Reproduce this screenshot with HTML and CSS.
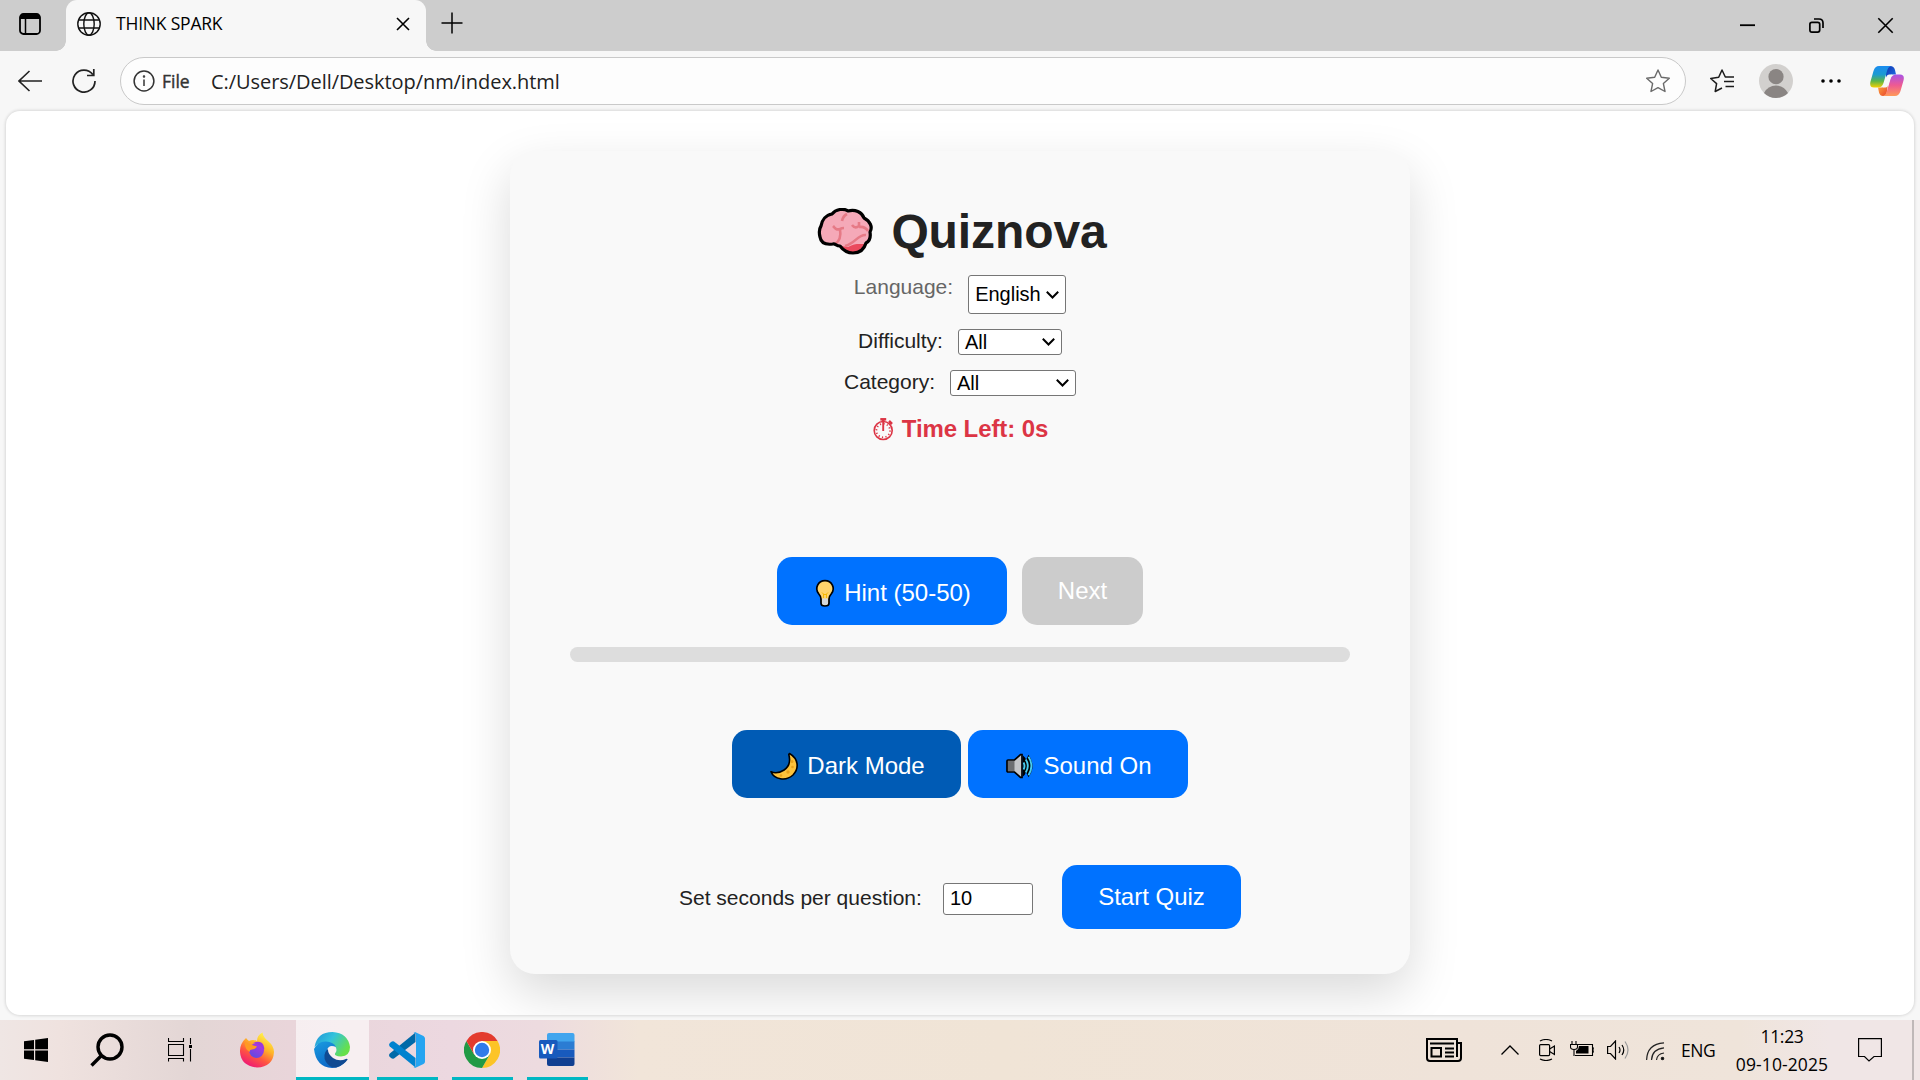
FILE: index.html
```html
<!DOCTYPE html>
<html lang="en">
<head>
<meta charset="utf-8">
<title>THINK SPARK</title>
<link rel="stylesheet" href="styles.css">
</head>
<body>
<div class="desktop">
  <header class="tabstrip">
    <svg class="tab-actions" viewBox="0 0 22 22"><rect x="1" y="1" width="20" height="20" rx="3.5" fill="none" stroke="#000" stroke-width="1.8"/><path d="M1 6V4.500Q1 1 4.500 1H17.500Q21 1 21 4.500V6Z"/><path d="M6.500 6V21" stroke="#000" stroke-width="1.500"/></svg>
    <div class="tab">
      <svg class="globe" viewBox="0 0 24 24" fill="none" stroke="#111" stroke-width="1.400"><circle cx="12" cy="12" r="11.200"/><ellipse cx="12" cy="12" rx="5.200" ry="11.200"/><path d="M2 8H22M2 16H22"/></svg>
      <span class="tab-title">THINK SPARK</span>
      <svg class="tab-close" viewBox="0 0 14 14" stroke="#000" stroke-width="1.600"><path d="M1 1L13 13M13 1L1 13"/></svg>
    </div>
    <svg class="new-tab" viewBox="0 0 22 22" stroke="#000" stroke-width="1.500"><path d="M11 0.500V21.500M0.500 11H21.500"/></svg>
    <div class="window-controls">
      <svg viewBox="0 0 15 15" stroke="#000" stroke-width="1.800"><path d="M0 7.200H15"/></svg>
      <svg viewBox="0 0 15 15" fill="none" stroke="#000" stroke-width="1.700"><rect x="0.900" y="4.300" width="9.800" height="9.800" rx="2"/><path d="M5 1H10Q14 1 14 5V10"/></svg>
      <svg viewBox="0 0 15 15" stroke="#000" stroke-width="1.600"><path d="M0.300 0.300L14.700 14.700M14.700 0.300L0.300 14.700"/></svg>
    </div>
  </header>

  <nav class="toolbar">
    <svg class="back" viewBox="0 0 24 22" fill="none" stroke="#222" stroke-width="1.600"><path d="M24 11H1M11.500 1L1 11L11.500 21"/></svg>
    <svg class="reload" viewBox="0 0 24 24" fill="none" stroke="#222" stroke-width="1.700"><path d="M23 12A11 11 0 1 1 20.800 5.500M21.800 0V6.500H15"/></svg>
    <div class="address">
      <svg class="info" viewBox="0 0 22 22" fill="none" stroke="#333" stroke-width="1.500"><circle cx="11" cy="11" r="9.900"/><path d="M11 9.500V16"/><circle cx="11" cy="6.500" r="0.500"/></svg>
      <span class="scheme">File</span>
      <span class="url">C:/Users/Dell/Desktop/nm/index.html</span>
      <svg class="star" viewBox="0 0 24 24" fill="none" stroke="#6a6a6a" stroke-width="1.400" stroke-linejoin="round"><path d="M12 1L15.300 8.300L23.300 9.200L17.400 14.600L19 22.500L12 18.700L5 22.500L6.600 14.600L0.700 9.200L8.700 8.300Z"/></svg>
    </div>
    <svg class="favorites" viewBox="0 0 24 24" fill="none" stroke="#1c1c1c" stroke-width="1.500" stroke-linejoin="round"><path d="M12 19L5.200 22.500L6.600 14.600L0.700 9.500L8.700 8.300L12 1L15.300 8H24M14 12.500H24M15.500 17.500H24"/></svg>
    <svg class="avatar" viewBox="0 0 34 34"><circle cx="17" cy="17" r="17" fill="#d2d0ce"/><circle cx="17" cy="12.700" r="7.600" fill="#8a8583"/><path d="M5 29Q9 21.500 17 21.500T29 29Q24 34 17 34T5 29Z" fill="#8a8583"/></svg>
    <svg class="more" viewBox="0 0 20 4"><circle cx="2" cy="2" r="1.800"/><circle cx="10" cy="2" r="1.800"/><circle cx="18" cy="2" r="1.800"/></svg>
    <svg class="copilot" viewBox="0 0 34 30">
      <defs>
        <linearGradient id="cpA" x1="0" y1="0" x2="0" y2="1"><stop offset="0" stop-color="#1b8cf0"/><stop offset=".4" stop-color="#1b9bd0"/><stop offset=".7" stop-color="#5bb548"/><stop offset="1" stop-color="#f5d000"/></linearGradient>
        <linearGradient id="cpB" x1="0" y1="0" x2="0" y2="1"><stop offset="0" stop-color="#a953e6"/><stop offset=".5" stop-color="#ee5a92"/><stop offset="1" stop-color="#ff9a58"/></linearGradient>
        <linearGradient id="cpC" x1="0" y1="0" x2="1" y2="1"><stop offset="0" stop-color="#1136b0"/><stop offset="1" stop-color="#1f70e8"/></linearGradient>
        <linearGradient id="cpD" x1="0" y1="0" x2="1" y2="1"><stop offset="0" stop-color="#ffae3c"/><stop offset="1" stop-color="#e8402e"/></linearGradient>
      </defs>
      <path d="M16 0H20Q24 0 25 4L26 8.500H22Q19 8.500 18 11L16 12Z" fill="url(#cpC)"/>
      <path d="M8 21.500H12Q15 21.500 16 19L18 18L17 25Q16.500 30 14 30H13Q10 30 9 26.500Z" fill="url(#cpD)"/>
      <path d="M9 0H21Q18 1 17 5L13.500 17Q12 21.500 8 21.500H4Q-1 21.500 0.500 15.500L3.500 5Q5 0 9 0Z" fill="url(#cpA)"/>
      <path d="M25 30H13Q16 29 17 25L20.500 13Q22 8.500 26 8.500H30Q35 8.500 33.500 14.500L30.500 25Q29 30 25 30Z" fill="url(#cpB)"/>
      <path d="M22 8.500H19Q17 8.500 16.200 11L13 21.500H15.500Q17.500 21.500 18.300 19L20.500 12Q21 9.500 22 8.500Z" fill="#f7f7f7"/>
    </svg>
  </nav>

  <main class="page">
    <section class="card">
      <h1 class="title">
        <svg class="brain" viewBox="0 0 60 48"><path d="M7 18C8 12 12 7 18 6C22 1 30 0 34 3C41 1 48 4 50 10C56 13 59 19 56 24C57 30 56 33 52 35C50 42 45 45 39 45C33 45 29 42 26 38C22 38 21 35 19 36C12 37 7 35 6 29C5 25 5 21 7 18Z" fill="#f5a9b8"/><path d="M34 39Q40 36 43 36H51Q48 44 39 44.500Q32 44 27 38Z" fill="#ea4a5d"/><path d="M19 18C22 21 22 22 26 21C28 20 29 20 30 20M26 21C27 27 26 33 21 36M33 6Q29 8 28 13M45 14V18Q41 21 38 17M45 19Q51 18 54 23M52 27C44 26 42 35 31 38" fill="none" stroke="#e67a86" stroke-width="2.600"/><path d="M7 18C8 12 12 7 18 6C22 1 30 0 34 3C41 1 48 4 50 10C56 13 59 19 56 24C57 30 56 33 52 35C50 42 45 45 39 45C33 45 29 42 26 38C22 38 21 35 19 36C12 37 7 35 6 29C5 25 5 21 7 18Z" fill="none" stroke="#000" stroke-width="3.200" stroke-linejoin="round"/></svg>
        <span>Quiznova</span>
      </h1>
      <div class="field language">
        <span class="label">Language:</span>
        <span class="select">English<svg class="chevron" viewBox="0 0 13 8"><path d="M0.800 0.800L6.500 6.500L12.200 0.800"/></svg></span>
      </div>
      <div class="field difficulty">
        <span class="label">Difficulty:</span>
        <span class="select">All<svg class="chevron" viewBox="0 0 13 8"><path d="M0.800 0.800L6.500 6.500L12.200 0.800"/></svg></span>
      </div>
      <div class="field category">
        <span class="label">Category:</span>
        <span class="select">All<svg class="chevron" viewBox="0 0 13 8"><path d="M0.800 0.800L6.500 6.500L12.200 0.800"/></svg></span>
      </div>
      <div class="timer">
        <svg class="stopwatch" viewBox="0 0 24 24" fill="none" stroke="#dc3545"><circle cx="12.200" cy="13.500" r="9" stroke-width="1.600"/><circle cx="12.200" cy="13.500" r="6.800" stroke-width="1.800" stroke-dasharray="1.200 2.360"/><path d="M12.200 14V5" stroke-width="1.900"/><path d="M9.300 2.300H15.200" stroke-width="2.500"/><path d="M12.200 2V5" stroke-width="2.800"/><path d="M18 4L21 7" stroke-width="2.500"/></svg>
        <span>Time Left: 0s</span>
      </div>
      <div class="actions">
        <button class="btn hint"><svg class="emoji" viewBox="0 0 28 28"><path d="M10 20Q10 17.500 7.500 14.500C3.500 9 7 1.700 14 1.700S24.500 9 20.500 14.500Q18 17.500 18 20V24Q18 27 14 27T10 24Z" fill="#ffd36b" stroke="#000" stroke-width="1.700"/><path d="M11 19.500H17V24.500Q16.500 26 14 26T11 24.500Z" fill="#d6d8da"/><path d="M12.500 19V15L11 13.500M15.500 19V15L17 13.500M12.500 15.500H15.500" fill="none" stroke="#f6b800"/></svg>Hint (50-50)</button>
        <button class="btn next">Next</button>
      </div>
      <div class="progress"></div>
      <div class="toggles">
        <button class="btn dark"><svg class="emoji" viewBox="0 0 28 28"><path d="M19.500 1.500C29 7 29 17 23 23C16 29.500 4 27.500 1 19.800C8 22.500 23 18 18.800 2.500Z" fill="#fcc23c" stroke="#000" stroke-width="1.600" stroke-linejoin="round"/><g fill="#e8a21c"><circle cx="22" cy="9.500" r="1.500"/><circle cx="22.500" cy="15" r="1.300"/><circle cx="18" cy="20" r="1.700"/><circle cx="11" cy="23.500" r="1.300"/></g></svg>Dark Mode</button>
        <button class="btn sound"><svg class="emoji" viewBox="0 0 28 28"><path d="M17 3.500Q20 6 20 8L22.500 2.800Q30.500 14 22.500 25.200L20 20Q19 23 17 24.500Z"/><path d="M17.500 10.500Q19.500 14 17.500 17.500M19.800 7.500Q23.800 14 19.800 20.500M22.500 4.800Q28.300 14 22.500 23.200" fill="none" stroke="#48cdf0" stroke-width="1.900"/><path d="M1 9Q1 8 2 8H8.500L14.500 2.500H16V25.500H14.500L8.500 20H2Q1 20 1 19Z" fill="#c3c5c8"/><path d="M1.500 8.500H8.500V19.500H1.500Z" fill="#6c6e71"/><path d="M1 9Q1 8 2 8H8.500L14.500 2.500H16V25.500H14.500L8.500 20H2Q1 20 1 19Z" fill="none" stroke="#000" stroke-width="1.700"/></svg>Sound On</button>
      </div>
      <div class="setup">
        <span class="label">Set seconds per question:</span>
        <input class="seconds" type="text" value="10">
        <button class="btn start">Start Quiz</button>
      </div>
    </section>
  </main>

  <footer class="taskbar">
    <div class="item menu"><svg width="24" height="24" viewBox="0 0 24 24"><path d="M0 3.300L10 2V11.300H0ZM11.200 1.800L24 0V11.300H11.200ZM0 12.500H10V22L0 20.700ZM11.200 12.500H24V24L11.200 22.200Z"/></svg></div>
    <div class="item search"><svg width="34" height="34" viewBox="0 0 34 34" fill="none" stroke="#000" stroke-width="3.400"><circle cx="20" cy="14" r="12"/><path d="M11.500 22.500L1.500 32.500"/></svg></div>
    <div class="item views"><svg width="24" height="24" viewBox="0 0 24 24" fill="none" stroke="#000" stroke-width="1.100"><path d="M0.500 0V3.500H15.500V0M0.500 6.500H15.500V17.500H0.500ZM0.500 23.500V20.500H15.500V23.500M22.500 0V6M22.500 11V23.500"/><path d="M21 7H24V10H21Z" fill="#000" stroke="none"/></svg></div>
    <div class="item firefox"><svg width="36" height="36" viewBox="0 0 36 36">
      <defs><linearGradient id="ffA" x1=".8" y1=".1" x2=".3" y2="1"><stop offset="0" stop-color="#fff04b"/><stop offset=".35" stop-color="#ffb327"/><stop offset=".65" stop-color="#ff5640"/><stop offset="1" stop-color="#ee1678"/></linearGradient><linearGradient id="ffB" x1=".8" y1="0" x2=".2" y2="1"><stop offset="0" stop-color="#b833e1"/><stop offset="1" stop-color="#5b4ce0"/></linearGradient></defs>
      <path d="M7 6Q8.500 8 10 9Q14 7 18 9Q18 3 23.500 0.500Q24 5 29 9Q35 14 35 20Q34 35 18 35.500Q2 34 1 20Q0.500 12 7 6Z" fill="url(#ffA)"/><circle cx="17.500" cy="18.500" r="7.500" fill="url(#ffB)"/><path d="M14 11Q19 8.500 23 11Q26 14 25 18Q21 12 14 11Z" fill="#9b39dc"/><path d="M6 9Q8 12 13 13L18 14.500Q17 17 13 17.500Q10 18 11 20Q5 17 6 9Z" fill="#ff9a22"/></svg></div>
    <div class="item edge active"><svg width="36" height="36" viewBox="0 0 36 36">
      <defs><linearGradient id="edA" x1="0" y1="0" x2="1" y2=".5"><stop offset="0" stop-color="#2093d8"/><stop offset=".5" stop-color="#33c3dc"/><stop offset="1" stop-color="#66e04b"/></linearGradient><linearGradient id="edB" x1="0" y1="0" x2=".6" y2="1"><stop offset="0" stop-color="#1a9ce0"/><stop offset="1" stop-color="#0b62c4"/></linearGradient></defs>
      <path d="M0.500 15Q3 0 18.500 0Q34 1 36 15Q36 24 27 24.500Q20 24 21 21.500Q24 18 21 14Q14 7 5 12Q2 13 0.500 15Z" fill="url(#edA)"/><path d="M0 17Q4 9 12 9.500Q20 10 22 15Q15 12 13 18Q12 26 20 29.500Q27 31 33 27Q28 36 18 36Q2 35 0 17Z" fill="url(#edB)"/><path d="M13.500 17Q8 23 12 30Q16 36 22 35.500Q30 33 33.700 27.500Q33 26.500 32 27Q25 30 19 26Q14 22 14 18Z" fill="#104a92"/></svg></div>
    <div class="item open vscode"><svg width="36" height="36" viewBox="0 0 36 36"><path d="M26.500 0.500V10L5 26.500Q3.500 27 2 26L0.500 24.500Q-0.500 23 0.800 21.500Z" fill="#0069a8"/><path d="M26.500 35.500V26L5 9.500Q3.500 9 2 10L0.500 11.500Q-0.500 13 0.800 14.500Z" fill="#0082cf"/><path d="M26.500 0.300L34.500 4Q36 5 36 6.500V29.500Q36 31 34.500 32L26.500 35.700Q25.500 36 24.500 35L27 34V2L24.500 1Q25.500 0 26.500 0.300Z" fill="#25a4f1"/></svg></div>
    <div class="item open chrome"><svg width="36" height="36" viewBox="0 0 36 36"><path d="M18 9H33.600A18 18 0 0 1 18 36L25.800 22.500Z" fill="#fcc427"/><path d="M10.200 22.500L2.400 9A18 18 0 0 0 18 36L25.800 22.500Z" fill="#219a45"/><path d="M18 9H33.600A18 18 0 0 0 2.400 9L10.200 22.500Z" fill="#e33b2e"/><circle cx="18" cy="18" r="9" fill="#fff"/><circle cx="18" cy="18" r="7.200" fill="#2f7bea"/></svg></div>
    <div class="item open word"><span class="word-logo"><svg width="36" height="34" viewBox="0 0 36 34"><path d="M10 0H33.500Q35.500 0 35.500 2V9H8V2Q8 0 10 0Z" fill="#41a5ee"/><path d="M8 8.500H35.500V16.500H8Z" fill="#2b7cd3"/><path d="M8 16.500H35.500V24.500H8Z" fill="#185abd"/><path d="M8 24.500H35.500V31Q35.500 33 33.500 33H10Q8 33 8 31Z" fill="#103f91"/><rect x="0" y="7" width="18.500" height="18.500" rx="1.500" fill="#185abd"/></svg><b>W</b></span></div>

    <div class="tray">
      <svg class="news" viewBox="0 0 36 24" fill="none" stroke="#000"><path d="M31 5H35V20Q35 23 32 23H4Q1 23 1 20V1H31V19" stroke-width="2"/><path d="M4 5.500H28M19 10.500H28M19 14.500H28M19 18.500H28" stroke-width="1.800"/><rect x="5.500" y="10" width="9.500" height="8.500" stroke-width="2"/></svg>
      <svg class="up" viewBox="0 0 18 10" fill="none" stroke="#000" stroke-width="1.300"><path d="M0.500 9.500L9 1L17.500 9.500"/></svg>
      <svg class="camera" viewBox="0 0 16 22" fill="none" stroke="#000" stroke-width="1.200"><path d="M1 2Q7 -1 13 2M1 20Q7 23 13 20"/><rect x="0.600" y="5.600" width="10" height="11" rx="1"/><path d="M10.600 10L15.400 7V15.500L10.600 12.500"/></svg>
      <svg class="battery" viewBox="0 0 24 16" fill="none" stroke="#000" stroke-width="1.100"><path d="M7 3.500H22.500V14.500H5M22.500 7H24V11H22.500M2 0V3M6 0V3M0.500 3.500H7.500V6Q7.500 8.500 4 8.500Q0.500 8.500 0.500 6ZM4 9V15"/><path d="M9 5H18.500V12.500H6V10Q9 8 9 5Z" fill="#000" stroke="none"/></svg>
      <svg class="volume" viewBox="0 0 22 20" fill="none" stroke="#000" stroke-width="1.200"><path d="M0.600 6.500H3.500L8.500 1V19L3.500 13.500H0.600ZM12 7Q14 10 12 13M15 5Q18.500 10 15 15"/><path d="M18 1.500Q24 10 18 18.500" stroke="#999"/></svg>
      <svg class="wifi" viewBox="0 0 19 19" fill="none" stroke="#222" stroke-width="1.200"><path d="M0.600 18Q1 2 18 0.800M5.500 18Q6 7 18 5.800M10.500 18Q11 12 18 11"/><circle cx="16.500" cy="16.500" r="1.200" fill="#000"/></svg>
      <span class="lang">ENG</span>
      <div class="clock"><span>11:23</span><span class="date">09-10-2025</span></div>
      <svg class="notify" viewBox="0 0 24 24" fill="none" stroke="#000" stroke-width="1.200"><path d="M0.600 0.600H23.400V18.500H16L11 23L6.500 18.500H0.600Z"/></svg>
      <span class="peek"></span>
    </div>
  </footer>
</div>
</body>
</html>
```
FILE: styles.css
```css
* { box-sizing: border-box; }
body { margin: 0; width: 1920px; height: 1080px; overflow: hidden; font-family: "Liberation Sans", Arial, sans-serif; color: #222; }
svg { display: block; flex: none; }
.desktop { display: flex; flex-direction: column; height: 1080px; background: #f7f7f7; }

/* browser tabs */
.tabstrip { display: flex; align-items: flex-start; height: 51px; flex: none; background: #cdcdcd; font-family: "Open Sans", "Noto Sans", sans-serif; }
.tab-actions { width: 22px; height: 22px; margin: 13px 25px 0 19px; }
.tab { position: relative; display: flex; align-items: center; width: 360px; height: 51px; padding: 0 16px 3px 11px; background: #f7f7f7; border-radius: 11px 11px 0 0; }
.tab::before, .tab::after { content: ""; position: absolute; bottom: 0; width: 10px; height: 10px; }
.tab::before { left: -10px; background: radial-gradient(circle at 0 0, #cdcdcd 9.5px, #f7f7f7 10px); }
.tab::after { right: -10px; background: radial-gradient(circle at 100% 0, #cdcdcd 9.5px, #f7f7f7 10px); }
.globe { width: 24px; height: 24px; }
.tab-title { flex: 1; margin-left: 15px; font-size: 17.5px; letter-spacing: -0.2px; line-height: 47px; padding-bottom: 1px; color: #000; }
.tab-close { width: 14px; height: 14px; }
.new-tab { width: 22px; height: 22px; margin: 12px 0 0 15px; }
.window-controls { display: flex; gap: 54px; margin: 18px 27px 0 auto; }
.window-controls svg { width: 15px; height: 15px; overflow: visible; }

/* address row */
.toolbar { display: flex; align-items: center; height: 60px; flex: none; padding: 0 16px 0 18px; font-family: "Open Sans", "Noto Sans", sans-serif; }
.back { width: 24px; height: 22px; }
.reload { width: 24px; height: 24px; margin: 0 24px 0 30px; }
.address { display: flex; align-items: center; width: 1566px; height: 48px; padding: 0 15px 0 12px; background: #fdfdfd; border: 1px solid #c9c9c9; border-radius: 24px; }
.info { width: 22px; height: 22px; }
.scheme { width: 49px; margin-left: 7px; padding-bottom: 1px; font-size: 17.5px; letter-spacing: 0; color: #333; -webkit-text-stroke: 0.4px #333; }
.url { flex: 1; font-size: 20px; letter-spacing: -0.06px; color: #222; }
.star { width: 24px; height: 24px; }
.favorites { width: 24px; height: 24px; margin-left: 24px; }
.avatar { width: 34px; height: 34px; margin-left: 25px; }
.more { width: 20px; height: 4px; margin-left: 28px; }
.copilot { width: 34px; height: 30px; margin-left: 29px; }

/* page viewport */
.page { width: 1908px; height: 904px; flex: none; margin: 0 6px 5px; padding-top: 40px; overflow: hidden; background: #fff; border-radius: 14px; box-shadow: 0 0 3px 1px rgba(0, 0, 0, .12); }
.card { display: flex; flex-direction: column; align-items: center; width: 900px; height: 823px; margin: 0 auto; padding-top: 50px; background: #f9f9f9; border-radius: 25px; box-shadow: 0 19px 50px rgba(0, 0, 0, .15); }
.title { display: flex; align-items: center; gap: 17px; height: 62px; margin: 0 0 -2px 1px; font-size: 48px; line-height: 62px; font-weight: bold; letter-spacing: -0.1px; }
.brain { width: 60px; height: 48px; }

.field { display: flex; align-items: flex-start; gap: 15px; font-size: 21px; }
.label { font-size: 21px; line-height: 23px; }
.select { display: flex; align-items: center; justify-content: space-between; height: 26px; padding: 0 6px; background: #fff; border: 1px solid #767676; border-radius: 3px; font-size: 20px; color: #000; }
.chevron { width: 13px; height: 8px; fill: none; stroke: #000; stroke-width: 2; }
.language { margin-top: 14px; }
.language .label { color: #666; }
.language .select { width: 98px; height: 39px; }
.difficulty { margin-top: 15px; }
.difficulty .select { width: 104px; }
.category { margin-top: 15px; }
.category .select { width: 126px; }
.timer { display: flex; align-items: center; gap: 7px; height: 30px; margin-top: 18px; margin-right: 1px; font-size: 24px; font-weight: bold; letter-spacing: -0.1px; color: #dc3545; }
.stopwatch { width: 24px; height: 24px; }

.btn { display: flex; align-items: center; justify-content: center; height: 68px; padding: 0; border: 0; border-radius: 15px; background: #0072ff; color: #fff; font: 24px "Liberation Sans", Arial, sans-serif; }
.emoji { width: 28px; height: 28px; }
.actions { display: flex; gap: 15px; margin-top: 113px; }
.hint { width: 230px; padding: 3px 2px 0 0; gap: 5px; }
.next { width: 121px; background: #ccc; }
.progress { width: 780px; height: 15px; margin-top: 22px; flex: none; border-radius: 8px; background: #ddd; }
.toggles { display: flex; gap: 7px; margin-top: 68px; }
.toggles .btn { gap: 9px; padding: 3px 0 0 2px; }
.dark { width: 229px; background: #005bb5; }
.sound { width: 220px; }
.setup { display: flex; align-items: center; margin-top: 67px; }
.setup .label { width: 264px; }
.seconds { width: 90px; height: 32px; margin: 4px 29px 0 0; padding: 0 0 2px 6px; border: 1px solid #767676; border-radius: 3px; font: 20px "Liberation Sans", Arial, sans-serif; color: #000; }
.start { width: 179px; height: 64px; }

/* taskbar */
.taskbar { display: flex; height: 60px; flex: none; background: linear-gradient(90deg, #efe6e4 0, #efe2df 60px, #e3d6d5 190px, #e9d5da 290px, #ecd8e0 450px, #eddbdf 540px, #f1e5d9 640px, #f0e4d6 1000px, #efe3d9 1450px, #efe4da 1740px, #f0e6e6 1830px, #f0e6e6 100%); font-family: "Open Sans", "Noto Sans", sans-serif; color: #000; }
.item { display: flex; align-items: center; justify-content: center; height: 60px; }
.menu { width: 72px; }
.search { width: 72px; padding: 0 2px 1px 0; }
.views { width: 72px; }
.firefox { width: 80px; padding-left: 1px; }
.edge { width: 73px; padding-right: 2px; }
.edge.active { background: rgba(255, 255, 255, .6); border-bottom: 3px solid #00b7c3; padding-top: 3px; }
.open { width: 61px; margin-left: 8px; border-bottom: 3px solid #00b7c3; padding: 3px 2px 0 0; }
.chrome, .word { margin-left: 14px; }
.word-logo { position: relative; }
.word-logo b { position: absolute; left: 0; top: 7px; width: 18px; text-align: center; font-size: 14px; line-height: 18px; color: #fff; }
.tray { display: flex; align-items: center; margin-left: auto; }
.news { width: 36px; height: 24px; }
.up { width: 18px; height: 10px; margin-left: 39px; }
.camera { width: 16px; height: 22px; margin-left: 20px; }
.battery { width: 24px; height: 16px; margin: 0 0 2px 15px; }
.volume { width: 22px; height: 20px; margin-left: 13px; }
.wifi { width: 19px; height: 19px; margin: 2px 0 0 17px; }
.lang { width: 53px; margin: 0 0 0 16px; font-size: 17.5px; letter-spacing: -0.5px; }
.clock { display: flex; flex-direction: column; align-items: center; width: 96px; font-size: 17.5px; line-height: 28px; letter-spacing: -0.3px; }
.date { letter-spacing: 0.1px; }
.notify { width: 24px; height: 24px; margin-left: 28px; }
.peek { width: 2px; height: 60px; margin: 0 6px 0 30px; background: #bfb8b8; }
```
